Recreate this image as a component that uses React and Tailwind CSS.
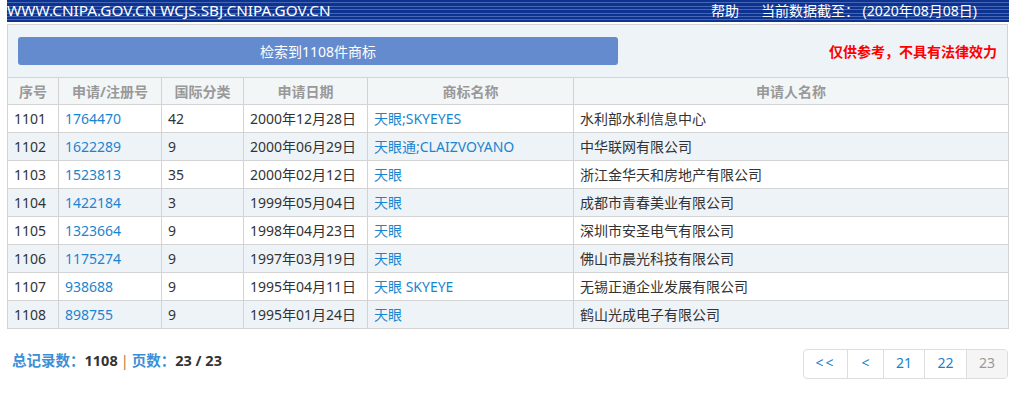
import React from "react";

const rows = [
  ["1101", "1764470", "42", "2000年12月28日", "天眼;SKYEYES", "水利部水利信息中心"],
  ["1102", "1622289", "9", "2000年06月29日", "天眼通;CLAIZVOYANO", "中华联网有限公司"],
  ["1103", "1523813", "35", "2000年02月12日", "天眼", "浙江金华天和房地产有限公司"],
  ["1104", "1422184", "3", "1999年05月04日", "天眼", "成都市青春美业有限公司"],
  ["1105", "1323664", "9", "1998年04月23日", "天眼", "深圳市安圣电气有限公司"],
  ["1106", "1175274", "9", "1997年03月19日", "天眼", "佛山市晨光科技有限公司"],
  ["1107", "938688", "9", "1995年04月11日", "天眼 SKYEYE", "无锡正通企业发展有限公司"],
  ["1108", "898755", "9", "1995年01月24日", "天眼", "鹤山光成电子有限公司"],
];

const heads = ["序号", "申请/注册号", "国际分类", "申请日期", "商标名称", "申请人名称"];
const widths = ["w-[51px]", "w-[103px]", "w-[82px]", "w-[124px]", "w-[206px]", "w-[435px]"];

export default function App() {
  return (
    <div className="w-[1022px] h-[398px] bg-white text-[14px] text-[#333] font-['Noto_Sans','Noto_Sans_CJK_SC',sans-serif] overflow-hidden">
      <div className="ml-[7px] w-[1002px]">
        {/* top bar */}
        <div className="h-[22px] flex items-center justify-between text-white leading-none bg-[repeating-linear-gradient(180deg,#0c338f_0px,#0c338f_2.4px,#4767b6_2.4px,#4767b6_3.4px)]">
          <span className="text-[15.3px]">WWW.CNIPA.GOV.CN WCJS.SBJ.CNIPA.GOV.CN</span>
          <div className="flex items-center gap-[22px] pr-[32px] text-[14px]">
            <span>帮助</span>
            <span>当前数据截至：&nbsp;(2020年08月08日)</span>
          </div>
        </div>

        {/* search panel */}
        <div className="mt-[2px] w-[1001px] border border-b-0 border-[#d3d3d3] bg-[#eef3f7] flex items-center justify-between pl-[10px] pr-[10px] h-[53px]">
          <div className="w-[600px] h-[28px] rounded-[3px] bg-[#658bcf] text-white flex items-center justify-center">
            检索到1108件商标
          </div>
          <span className="text-[#f00] font-bold">仅供参考，不具有法律效力</span>
        </div>

        {/* results table */}
        <table className="w-[1001px] border-collapse table-fixed">
          <thead>
            <tr className="h-[27px] bg-[#f3f6f7]">
              {heads.map((h, i) => (
                <th key={h} className={`${widths[i]} border border-[#d3d3d3] text-[#999] font-bold text-center p-0`}>
                  {h}
                </th>
              ))}
            </tr>
          </thead>
          <tbody>
            {rows.map((r, idx) => (
              <tr key={r[0]} className={`h-[28px] ${idx % 2 ? "bg-[#eef3f8]" : "bg-white"}`}>
                <td className="border border-[#d3d3d3] pl-[6px] py-0">{r[0]}</td>
                <td className="border border-[#d3d3d3] pl-[6px] py-0 text-[#1a85cf]">{r[1]}</td>
                <td className="border border-[#d3d3d3] pl-[6px] py-0">{r[2]}</td>
                <td className="border border-[#d3d3d3] pl-[6px] py-0">{r[3]}</td>
                <td className="border border-[#d3d3d3] pl-[6px] py-0 text-[#1a85cf]">{r[4]}</td>
                <td className="border border-[#d3d3d3] pl-[6px] py-0">{r[5]}</td>
              </tr>
            ))}
          </tbody>
        </table>

        {/* footer */}
        <div className="mt-[20px] flex items-start justify-between">
          <div className="pl-[5px] pt-[1px] font-bold text-[#3b8fd6] text-[14.5px] leading-[20px]">
            总记录数：<span className="text-[#333]">1108</span>
            <span className="text-[#b07a3a] font-normal mx-[3px]">|</span>
            页数：<span className="text-[#333]">23 / 23</span>
          </div>
          <div className="mr-[1px] flex h-[30px] border border-[#ddd] rounded-[4px] overflow-hidden text-[#1a7fd0] leading-none">
            <span className="w-[44px] flex items-center justify-center tracking-[2px] border-r border-[#ddd] pb-[2px]">&lt;&lt;</span>
            <span className="w-[36px] flex items-center justify-center border-r border-[#ddd] pb-[2px]">&lt;</span>
            <span className="w-[41px] flex items-center justify-center border-r border-[#ddd] pb-[2px]">21</span>
            <span className="w-[42px] flex items-center justify-center border-r border-[#ddd] pb-[2px]">22</span>
            <span className="w-[40px] flex items-center justify-center bg-[#f5f5f5] text-[#999] pb-[2px]">23</span>
          </div>
        </div>
      </div>
    </div>
  );
}
